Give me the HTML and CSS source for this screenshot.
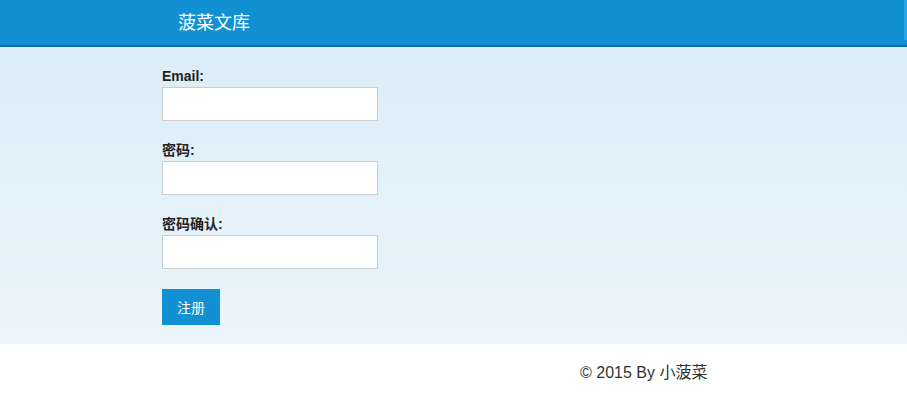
FILE: index.html
```html
<!DOCTYPE html>
<html lang="zh-CN">
<head>
    <meta charset="UTF-8">
    <meta name="viewport" content="width=device-width, initial-scale=1.0">
    <title>注册 - 菠菜文库</title>
    <link rel="stylesheet" href="styles.css">
</head>
<body>
    <div class="navbar">
        <a href="#" class="brand">菠菜文库</a>
        <span class="nav-edge"></span>
    </div>

    <div class="main">
        <form class="signup-form">
            <div class="field">
                <label for="email">Email:</label>
                <input type="text" id="email">
            </div>
            <div class="field">
                <label for="password">密码:</label>
                <input type="password" id="password">
            </div>
            <div class="field">
                <label for="password2">密码确认:</label>
                <input type="password" id="password2">
            </div>
            <button type="submit" class="btn">注册</button>
        </form>
    </div>

    <div class="footer">
        <p>&copy; 2015 By 小菠菜</p>
    </div>
</body>
</html>
```

FILE: styles.css
```css
body {
    margin: 0;
    font-family: "Liberation Sans", Arial, "Noto Sans CJK SC", sans-serif;
    color: #333;
    background: white;
}
.navbar {
    height: 45px;
    background: #1190d4;
    border-bottom: 2px solid #0b6fa8;
    display: flex;
    align-items: center;
    justify-content: space-between;
}
.brand {
    margin-left: 178px;
    color: white;
    font-size: 18px;
    text-decoration: none;
    margin-top: -4px;
}
.nav-edge {
    width: 3px;
    height: 40px;
    align-self: flex-start;
    background: #2aa3e6;
}
.main {
    background: linear-gradient(to bottom, #dbedf8, #ebf5fc);
    padding: 21px 0 19px 162px;
}
.field {
    margin-bottom: 21px;
}
.field label {
    display: block;
    font-size: 14px;
    font-weight: bold;
    line-height: 17px;
    margin-bottom: 2px;
    color: #222;
}
.field input {
    box-sizing: border-box;
    width: 216px;
    height: 34px;
    border: 1px solid #ccc;
    background: white;
    margin: 0;
    padding: 4px 6px;
}
.btn {
    display: block;
    width: 58px;
    height: 36px;
    margin-top: -1px;
    border: none;
    background: #1190d4;
    color: white;
    font-family: "Liberation Sans", Arial, "Noto Sans CJK SC", sans-serif;
    font-size: 14px;
    padding: 0;
}
.footer {
    padding: 18px 0 0 580px;
}
.footer p {
    margin: 0;
    font-size: 16px;
    line-height: 22px;
    color: #333;
}
```
